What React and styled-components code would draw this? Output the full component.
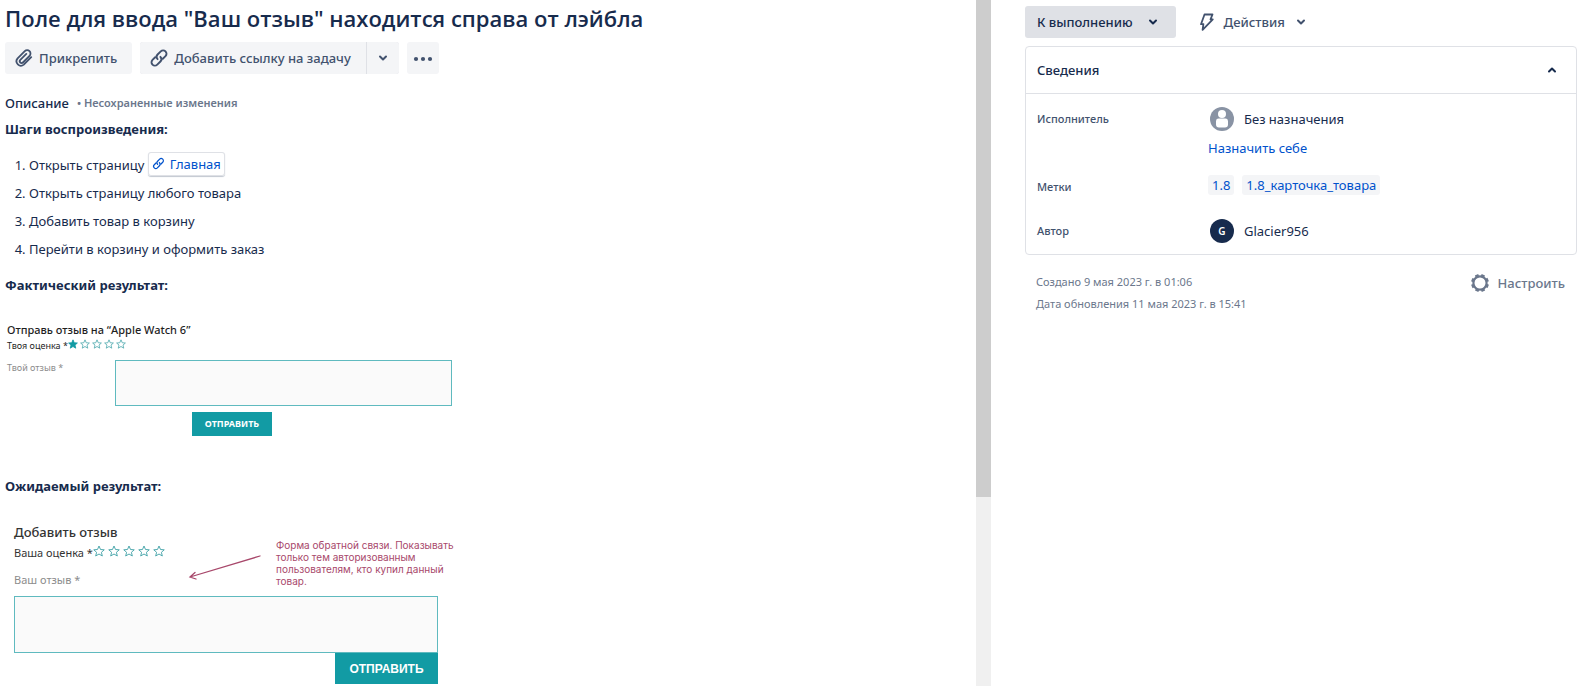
import React from 'react';
import styled, { createGlobalStyle } from 'styled-components';

const GlobalStyle = createGlobalStyle`
  *, *::before, *::after { box-sizing: border-box; }
  body {
    margin: 0;
    background: #fff;
    color: #172b4d;
    font: 400 13px/20px "Noto Sans", "Segoe UI", sans-serif;
  }
  button, textarea { font: inherit; color: inherit; margin: 0; }
  h1, h2, h3, p, ol, dl, dd, figure { margin: 0; padding: 0; }
  a { color: #0052cc; text-decoration: none; }
  svg { display: block; flex: none; }
`;

const Page = styled.div`
  display: grid;
  grid-template-columns: minmax(0, 976fr) 15px minmax(0, 602fr);
  min-height: 100vh;
`;

const Main = styled.main`
  padding: 0 5px 2px;
`;

const Title = styled.h1`
  font: 600 22px/36px "Open Sans", "Segoe UI", sans-serif;
`;

const Toolbar = styled.div`
  display: flex;
  gap: 8px;
  margin-top: 6px;
`;

const Button = styled.button`
  display: inline-flex;
  align-items: center;
  justify-content: center;
  gap: ${(p) => p.$gap || 5}px;
  height: 32px;
  padding: ${(p) => (p.$icon ? '0 6px' : '0 15px 0 9px')};
  border: 0;
  border-radius: ${(p) => p.$radius || '3px'};
  background: ${(p) => p.$bg || '#f4f5f7'};
  color: ${(p) => p.$color || '#42526e'};
  font-weight: 500;
  white-space: nowrap;
  cursor: pointer;
`;

const StatusButton = styled(Button)`
  gap: 12px;
  padding-left: 12px;
  background: #dfe1e6;
  color: #172b4d;
`;

const SettingsButton = styled(Button)`
  gap: 8px;
  padding-right: 12px;
  background: transparent;
  color: #6b778c;
`;

const SplitToggle = styled(Button)`
  width: 32px;
`;

const Split = styled.div`
  display: flex;
  gap: 1px;
  border-radius: 3px;
  background: #dfe1e6;
`;

const DescriptionHead = styled.div`
  display: flex;
  align-items: center;
  gap: 8px;
  margin-top: 19px;
`;

const Label = styled.h2`
  font-size: 13px;
  font-weight: 500;
  line-height: 20px;
`;

const Unsaved = styled.span`
  color: #6b778c;
  font-size: 11px;
  font-weight: 600;
`;

const Heading = styled.h3`
  margin-top: ${(p) => p.$top}px;
  font-size: 13px;
  font-weight: 700;
  line-height: 20px;
`;

const Steps = styled.ol`
  margin-top: 12px;
  padding-left: 24px;
  line-height: 28px;
`;

const SmartLink = styled.a`
  display: inline-flex;
  align-items: center;
  gap: 5px;
  height: 24px;
  padding: 0 4px;
  border-radius: 3px;
  line-height: 24px;
  box-shadow: inset 0 0 0 1px #dfe1e6, 0 1px 1px #c1c7d0;
`;

const ActualFigure = styled.figure`
  width: 447px;
  margin-top: 27px;
  padding-left: 2px;
  color: #1f1f1f;
  font-size: 9px;
`;

const ExpectedFigure = styled.figure`
  width: 450px;
  margin-top: 25px;
  padding-left: 9px;
  color: #333;
  font-size: 11px;
`;

const FormTitle = styled.p`
  font-size: ${(p) => p.$size}px;
  font-weight: 500;
  line-height: ${(p) => p.$line}px;
`;

const Rating = styled.div`
  display: flex;
  align-items: center;
  line-height: ${(p) => p.$line}px;
`;

const Stars = styled.span`
  display: flex;
  gap: ${(p) => p.$gap}px;
  padding-bottom: 4px;
`;

const InlineField = styled.div`
  display: flex;
  justify-content: space-between;
  margin-top: 6px;
`;

const FieldLabel = styled.label`
  display: block;
  color: #8c8c8c;
  line-height: 16px;
`;

const TextBox = styled.textarea`
  display: block;
  width: ${(p) => p.$width}px;
  height: ${(p) => p.$height}px;
  padding: 4px;
  border: 1px solid #5fbabf;
  border-radius: 0;
  background: #fafafa;
  outline: 0;
  resize: none;
`;

const Submit = styled.button`
  display: block;
  width: ${(p) => (p.$large ? 103 : 80)}px;
  height: ${(p) => (p.$large ? 31 : 24)}px;
  margin: ${(p) => (p.$large ? '0 0 0 auto' : '6px 0 0 185px')};
  padding: 0;
  border: 0;
  background: #129ba4;
  color: #fff;
  font-family: ${(p) => (p.$large ? '"Liberation Sans", Arial' : '"Noto Sans"')}, sans-serif;
  font-size: ${(p) => (p.$large ? 12 : 9)}px;
  font-weight: 700;
  cursor: pointer;
`;

const ExpectedForm = styled.div`
  width: 424px;
`;

const ExpectedTop = styled.div`
  display: grid;
  grid-template-columns: 174px 88px 188px;
`;

const FormLines = styled.div`
  padding-top: 1px;

  label { margin-top: 8px; }
`;

const ArrowCell = styled.div`
  padding-top: 34px;
`;

const Annotation = styled.figcaption`
  padding-top: 18px;
  padding-bottom: 9px;
  color: #a8486b;
  font: 400 10px/12px Inter, sans-serif;
`;

const Scrollbar = styled.div`
  background: #f0f0f0;
`;

const Thumb = styled.div`
  height: 72.5%;
  background: #cdcdcd;
`;

const Side = styled.aside`
  padding: 6px 16px 16px 34px;
`;

const SideToolbar = styled.div`
  display: flex;
  gap: 13px;
`;

const Card = styled.section`
  margin-top: 8px;
  border: 1px solid #dfe1e6;
  border-radius: 4px;
`;

const CardHead = styled.button`
  display: flex;
  align-items: center;
  justify-content: space-between;
  width: 100%;
  height: 47px;
  padding: 0 16px 0 11px;
  border: 0;
  border-bottom: 1px solid #dfe1e6;
  background: none;
  font-weight: 500;
  cursor: pointer;
`;

const Fields = styled.dl`
  display: grid;
  grid-template-columns: 171px minmax(0, 1fr);
  padding: 11px 11px 9px;
`;

const Term = styled.dt`
  padding-top: ${(p) => p.$top || 4}px;
  color: #42526e;
  font-size: 11px;
  font-weight: 500;
`;

const Value = styled.dd`
  padding-bottom: ${(p) => p.$bottom || 0}px;
`;

const Person = styled.div`
  display: flex;
  align-items: center;
  gap: 10px;
  height: 28px;
  padding-left: 2px;
`;

const Initial = styled.span`
  display: grid;
  place-items: center;
  width: 24px;
  height: 24px;
  border-radius: 50%;
  background: #172b4d;
  color: #fff;
  font-size: 10px;
  font-weight: 600;
`;

const AssignLink = styled.a`
  display: block;
  margin-top: 5px;
`;

const Tags = styled.div`
  display: flex;
  gap: 8px;
`;

const Tag = styled.a`
  padding: 0 4px;
  border-radius: 3px;
  background: #f4f5f7;
`;

const Footer = styled.footer`
  display: flex;
  justify-content: space-between;
  align-items: flex-start;
  margin-top: 12px;
  padding-left: 11px;
`;

const Dates = styled.div`
  padding-top: 4px;
  color: #6b778c;
  font-size: 11px;
  line-height: 22px;
`;

const ClipIcon = () => (
  <svg width="20" height="20" viewBox="0 0 20 20" fill="none" stroke="currentColor" strokeWidth="1.8" strokeLinecap="round" strokeLinejoin="round" aria-hidden="true">
    <path d="M17.2 9.2 9.8 16.6a4.4 4.4 0 0 1-6.2-6.2l7.2-7.2a3.3 3.3 0 0 1 4.7 0 3.3 3.3 0 0 1 0 4.7l-6.6 6.6a1.8 1.8 0 0 1-2.6-2.6l6-6" />
  </svg>
);

const LinkIcon = ({ size }) => (
  <svg width={size} height={size} viewBox="0 0 24 24" fill="none" stroke="currentColor" strokeWidth="2.3" strokeLinecap="round" aria-hidden="true">
    <path d="M10.3 13.4a4 4 0 0 1 0-5.6l3.8-3.8a4 4 0 0 1 5.700 5.700l-3.200 3.200" />
    <path d="M13.700 10.600a4 4 0 0 1 0 5.600l-3.800 3.800a4 4 0 0 1-5.700-5.700l3.200-3.200" />
  </svg>
);

const Chevron = ({ up }) => (
  <svg width="16" height="16" viewBox="0 0 16 16" fill="none" stroke="currentColor" strokeWidth="2" strokeLinecap="round" strokeLinejoin="round" aria-hidden="true">
    <path d={up ? 'm5 9.5 3-3 3 3' : 'm5 6.5 3 3 3-3'} />
  </svg>
);

const MoreIcon = () => (
  <svg width="20" height="20" viewBox="0 0 20 20" fill="currentColor" aria-hidden="true">
    <circle cx="3" cy="11" r="2.1" />
    <circle cx="10" cy="11" r="2.1" />
    <circle cx="17" cy="11" r="2.1" />
  </svg>
);

const BoltIcon = () => (
  <svg width="18" height="20" viewBox="0 0 18 20" fill="none" stroke="currentColor" strokeWidth="1.8" strokeLinejoin="round" aria-hidden="true">
    <path d="M6.500 2.500h8l-2 4.800h2.300L4.600 17.800l.8-5.600H3z" />
  </svg>
);

const GearIcon = () => {
  const teeth = [0, 45, 90, 135, 180, 225, 270, 315];
  return (
    <svg width="20" height="20" viewBox="0 0 20 20" fill="none" stroke="currentColor" aria-hidden="true">
      <circle cx="10" cy="10" r="6.6" strokeWidth="2.2" />
      {teeth.map((a) => (
        <path key={a} d="M10 4V1.1" strokeWidth="3.6" transform={`rotate(${a + 22} 10 10)`} />
      ))}
    </svg>
  );
};

const PersonIcon = () => (
  <svg width="24" height="24" viewBox="0 0 24 24" aria-hidden="true">
    <circle cx="12" cy="12" r="12" fill="#8993a4" />
    <circle cx="12" cy="7" r="4" fill="#fff" />
    <path d="M6 14a2.6 2.6 0 0 1 2.6-2.4h6.8A2.6 2.6 0 0 1 18 14v3.6a3 3 0 0 1-3 3H9a3 3 0 0 1-3-3z" fill="#fff" />
  </svg>
);

const Star = ({ size, filled }) => (
  <svg width={size} height={size} viewBox="0 0 24 24" fill={filled ? '#129ba4' : 'none'} stroke={filled ? '#129ba4' : '#4fa9ae'} strokeWidth="2">
    <path d="m12 2 3 7 7.5.6-5.7 5 1.8 7.4L12 18l-6.6 4 1.8-7.4-5.7-5L9 9z" />
  </svg>
);

const StarRow = ({ size, gap, value }) => (
  <Stars $gap={gap} role="img" aria-label={`${value} / 5`}>
    {[1, 2, 3, 4, 5].map((n) => (
      <Star key={n} size={size} filled={n <= value} />
    ))}
  </Stars>
);

const Arrow = () => (
  <svg width="74" height="26" viewBox="0 0 74 26" fill="none" stroke="#a8486b" strokeWidth="1.3" strokeLinecap="round" aria-hidden="true">
    <path d="M72 1 2 22M7 17.5 2 22l6 2" />
  </svg>
);

export default function App() {
  return (
    <>
      <GlobalStyle />
      <Page>
        <Main>
          <Title>Поле для ввода "Ваш отзыв" находится справа от лэйбла</Title>
          <Toolbar>
            <Button type="button"><ClipIcon />Прикрепить</Button>
            <Split>
              <Button type="button" $radius="3px 0 0 3px"><LinkIcon size={20} />Добавить ссылку на задачу</Button>
              <SplitToggle type="button" $icon $radius="0 3px 3px 0" aria-label="Другие ссылки"><Chevron /></SplitToggle>
            </Split>
            <Button type="button" $icon aria-label="Ещё"><MoreIcon /></Button>
          </Toolbar>

          <DescriptionHead>
            <Label>Описание</Label>
            <Unsaved>• Несохраненные изменения</Unsaved>
          </DescriptionHead>

          <Heading $top={6}>Шаги воспроизведения:</Heading>
          <Steps>
            <li>Открыть страницу <SmartLink href="#main"><LinkIcon size={13} />Главная</SmartLink></li>
            <li>Открыть страницу любого товара</li>
            <li>Добавить товар в корзину</li>
            <li>Перейти в корзину и оформить заказ</li>
          </Steps>

          <Heading $top={12}>Фактический результат:</Heading>
          <ActualFigure>
            <FormTitle $size={11} $line={16}>Отправь отзыв на “Apple Watch 6”</FormTitle>
            <Rating $line={16}>Твоя оценка *<StarRow size={10} gap={2} value={1} /></Rating>
            <InlineField>
              <FieldLabel htmlFor="actual-review">Твой отзыв *</FieldLabel>
              <TextBox id="actual-review" $width={337} $height={46} />
            </InlineField>
            <Submit type="button">ОТПРАВИТЬ</Submit>
          </ActualFigure>

          <Heading $top={40}>Ожидаемый результат:</Heading>
          <ExpectedFigure>
            <ExpectedTop>
              <FormLines>
                <FormTitle $size={13} $line={20}>Добавить отзыв</FormTitle>
                <Rating $line={22}>Ваша оценка *<StarRow size={12} gap={3} value={0} /></Rating>
                <FieldLabel htmlFor="expected-review">Ваш отзыв *</FieldLabel>
              </FormLines>
              <ArrowCell><Arrow /></ArrowCell>
              <Annotation>Форма обратной связи. Показывать только тем авторизованным пользователям, кто купил данный товар.</Annotation>
            </ExpectedTop>
            <ExpectedForm>
              <TextBox id="expected-review" $width={424} $height={57} />
              <Submit type="button" $large>ОТПРАВИТЬ</Submit>
            </ExpectedForm>
          </ExpectedFigure>
        </Main>

        <Scrollbar><Thumb /></Scrollbar>

        <Side>
          <SideToolbar>
            <StatusButton type="button">К выполнению<Chevron /></StatusButton>
            <Button type="button" $bg="transparent" $gap={8}><BoltIcon />Действия<Chevron /></Button>
          </SideToolbar>
          <Card>
            <CardHead type="button" aria-expanded="true">Сведения<Chevron up /></CardHead>
            <Fields>
              <Term>Исполнитель</Term>
              <Value $bottom={17}>
                <Person><PersonIcon />Без назначения</Person>
                <AssignLink href="#assign">Назначить себе</AssignLink>
              </Value>
              <Term $top={2}>Метки</Term>
              <Value $bottom={22}>
                <Tags>
                  <Tag href="#1.8">1.8</Tag>
                  <Tag href="#1.8-card">1.8_карточка_товара</Tag>
                </Tags>
              </Value>
              <Term>Автор</Term>
              <Value>
                <Person><Initial>G</Initial>Glacier956</Person>
              </Value>
            </Fields>
          </Card>
          <Footer>
            <Dates>
              <p>Создано 9 мая 2023 г. в 01:06</p>
              <p>Дата обновления 11 мая 2023 г. в 15:41</p>
            </Dates>
            <SettingsButton type="button"><GearIcon />Настроить</SettingsButton>
          </Footer>
        </Side>
      </Page>
    </>
  );
}
